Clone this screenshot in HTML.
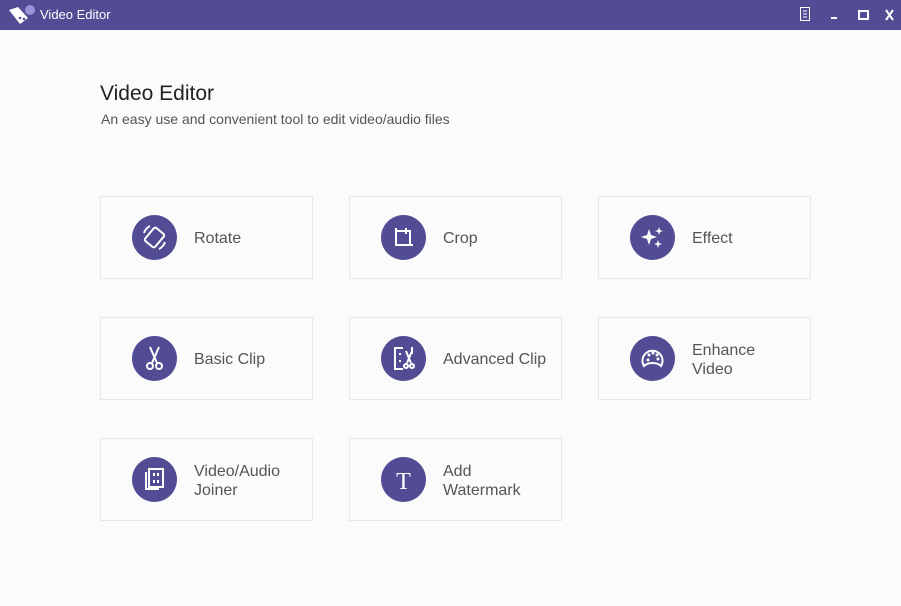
<!DOCTYPE html>
<html><head><style>
body{margin:0;width:901px;height:606px;background:#fbfbfc;font-family:"Liberation Sans",sans-serif;position:relative;overflow:hidden}
.tb{position:absolute;left:0;top:0;width:901px;height:30px;background:#524c94;color:#fff}
.tb .t{position:absolute;left:40px;top:7px;font-size:13px}
.card{position:absolute;width:213px;height:83px;border:1px solid #e6e7ea;background:#fbfbfc;box-sizing:border-box}
.ic{position:absolute;left:31px;top:18px;width:45px;height:45px;border-radius:50%;background:#524c94}
.ic svg{position:absolute;left:0;top:0}
.lb{position:absolute;left:93px;top:2px;height:79px;display:flex;align-items:center;font-size:16px;color:#555;line-height:19px}
h1{position:absolute;left:100px;top:82px;margin:0;font-size:21px;font-weight:normal;color:#222}
.sub{position:absolute;left:101px;top:111px;font-size:14px;color:#555}
</style></head><body>
<div class="tb">
<svg style="position:absolute;left:6px;top:4px" width="30" height="22" viewBox="0 0 30 22"><circle cx="24" cy="6" r="5" fill="#9a93d8"/><path d="M3 6 L12 3 L22 14 L14 20 Z" fill="#fff"/><circle cx="14" cy="14" r="1.3" fill="#524c94"/><circle cx="18" cy="15" r="1.3" fill="#524c94"/></svg>
<div class="t">Video Editor</div>
<svg style="position:absolute;left:798px;top:7px" width="100" height="16" viewBox="0 0 100 16"><rect x="2.5" y="0.5" width="9" height="13" fill="none" stroke="#fff"/><path d="M5 4h4M5 7h4M5 10h4" stroke="#fff"/><rect x="33" y="10" width="6" height="2" fill="#fff"/><rect x="61" y="4" width="9" height="8" fill="none" stroke="#fff" stroke-width="2"/><path d="M88 3l7 10M95 3l-7 10" stroke="#fff" stroke-width="2"/></svg>
</div>
<h1>Video Editor</h1>
<div class="sub">An easy use and convenient tool to edit video/audio files</div>

<div class="card" style="left:100px;top:196px"><div class="ic"><svg width="45" height="45"><g fill="none" stroke="#fff" stroke-width="2"><rect x="16" y="14" width="13" height="17" rx="2" transform="rotate(40 22.5 22.5)"/><path d="M12 18a12 12 0 0 1 6-7M33 27a12 12 0 0 1-6 7"/></g></svg></div><div class="lb">Rotate</div></div>
<div class="card" style="left:349px;top:196px"><div class="ic"><svg width="45" height="45"><path d="M15 13v17h17M15 16h14v14M25 13v6" fill="none" stroke="#fff" stroke-width="2"/></svg></div><div class="lb">Crop</div></div>
<div class="card" style="left:598px;top:196px"><div class="ic"><svg width="45" height="45" fill="#fff"><path d="M19 14l2 6 6 2-6 2-2 6-2-6-6-2 6-2z"/><path d="M29 12l1 3 3 1-3 1-1 3-1-3-3-1 3-1z"/><path d="M28 25l1 3 3 1-3 1-1 3-1-3-3-1 3-1z"/></svg></div><div class="lb">Effect</div></div>

<div class="card" style="left:100px;top:317px"><div class="ic"><svg width="45" height="45"><g fill="none" stroke="#fff" stroke-width="2"><path d="M18 11l7 16M27 11l-7 16"/><circle cx="18" cy="30" r="3"/><circle cx="27" cy="30" r="3"/></g></svg></div><div class="lb">Basic Clip</div></div>
<div class="card" style="left:349px;top:317px"><div class="ic"><svg width="45" height="45"><g fill="none" stroke="#fff" stroke-width="2"><path d="M22 12h-8v21h8M30 12h1v6"/><path d="M19 17v2M19 24v2M25 15l5 12M31 15l-5 12"/><circle cx="25" cy="30" r="2"/><circle cx="31" cy="30" r="2"/></g></svg></div><div class="lb">Advanced Clip</div></div>
<div class="card" style="left:598px;top:317px"><div class="ic"><svg width="45" height="45"><g fill="none" stroke="#fff" stroke-width="2"><path d="M14 30a10 10 0 1 1 17 0c-2-2-4-3-8.5-3s-6.5 1-8.5 3z"/></g><g fill="#fff"><circle cx="19" cy="19" r="1.5"/><circle cx="23" cy="17" r="1.5"/><circle cx="27" cy="19" r="1.5"/><circle cx="18" cy="24" r="1.5"/><circle cx="28" cy="23" r="1.5"/></g></svg></div><div class="lb">Enhance<br>Video</div></div>

<div class="card" style="left:100px;top:438px"><div class="ic"><svg width="45" height="45"><g fill="none" stroke="#fff" stroke-width="2"><path d="M14 15v17h13"/><rect x="17" y="12" width="14" height="18"/><path d="M22 16v3M26 16v3M22 23v3M26 23v3"/></g></svg></div><div class="lb">Video/Audio<br>Joiner</div></div>
<div class="card" style="left:349px;top:438px"><div class="ic"><svg width="45" height="45"><text x="22.5" y="32" text-anchor="middle" font-family="Liberation Serif,serif" font-size="24" fill="#fff">T</text></svg></div><div class="lb">Add<br>Watermark</div></div>
</body></html>
